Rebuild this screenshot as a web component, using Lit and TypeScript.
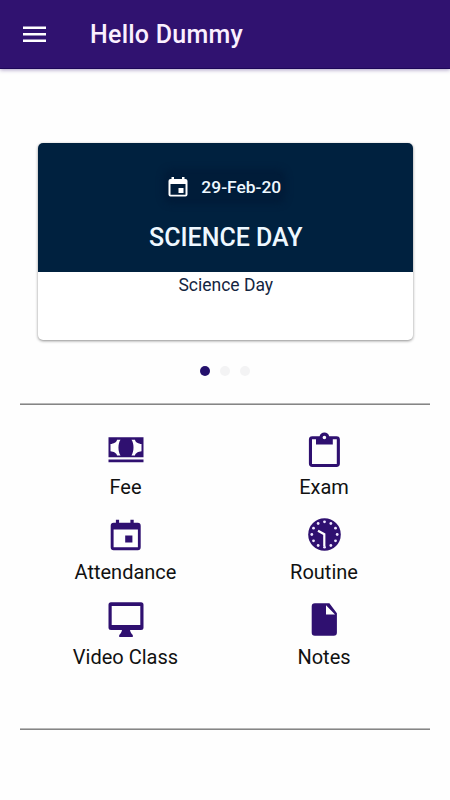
import { LitElement, html, css, svg } from "lit";
import { customElement, property } from "lit/decorators.js";

const ticks = Array.from({ length: 12 }, (_, i) => {
  const a = (i * Math.PI) / 6;
  return { x: 18.5 + 12.7 * Math.sin(a), y: 17.5 - 12.7 * Math.cos(a) };
});

const icons: Record<string, unknown> = {
  fee: svg`
    <path d="M.5 5.300h35v20H.5zM12.500 7.800H9C8.700 10.300 5.500 11.800 2.500 12.100V19.300c3 .3 6.200 1.800 6.500 4.200H12.500C9.800 19.500 9.800 11.500 12.500 7.800zM23.500 7.800c2.700 3.700 2.700 11.700 0 15.700h3.500c.3-2.400 3.500-3.900 6.500-4.200v-7.200c-3-.3-6.200-1.800-6.500-4.300z" fill-rule="evenodd"/>
    <path d="M.5 27.500h35v2.800H.5z"/>`,
  exam: svg`
    <path transform="translate(-.7)" fill-rule="evenodd" d="M31.200 4.200h-7.300a5 5 0 0 0-9.600 0H7a3.400 3.400 0 0 0-3.400 3.400v24A3.400 3.400 0 0 0 7 35h24.200a3.400 3.400 0 0 0 3.400-3.400v-24a3.400 3.400 0 0 0-3.400-3.400zM19.100 3.700a1.800 1.800 0 1 1 0 3.600a1.800 1.800 0 0 1 0-3.600zM31.500 32H6.700V7.300h4v5.200h16.800V7.300h4z"/>`,
  calendar: svg`
    <path transform="translate(-.8)" fill-rule="evenodd" d="M25.200 18.500h-7.200v7h7.200zM23.200 2.800v3H11.900v-3H8.700v3H6.600a3 3 0 0 0-3.100 3v21.400a3 3 0 0 0 3.100 3h23.800a3 3 0 0 0 3.100-3V8.800a3 3 0 0 0-3.100-3h-3.900v-3zM30.700 30.300H6.400V12.500h24.300z"/>`,
  clock: svg`
    <circle cx="18.500" cy="17.500" r="16.300"/>
    ${ticks.map((t) => svg`<circle class="mark" cx=${t.x} cy=${t.y} r="1.400"/>`)}
    <path class="hand" d="M12 13.700L18.300 17.200V29"/>`,
  monitor: svg`
    <path fill-rule="evenodd" d="M3 .3h30a2.500 2.500 0 0 1 2.500 2.500v22.700a2.500 2.500 0 0 1-2.500 2.500H22c.3 2 1.400 3.700 2.800 4.900v2.100H11.200v-2.100c1.400-1.200 2.500-2.900 2.800-4.900H3A2.500 2.500 0 0 1 .5 25.500V2.800A2.500 2.500 0 0 1 3 .3zM3.700 4v19h28.600V4z"/>`,
  note: svg`
    <path fill-rule="evenodd" d="M7.600 1.300h14.500L29.600 11.200v19.300a3.200 3.200 0 0 1-3.200 3.200H7.600a3.200 3.200 0 0 1-3.200-3.200v-26A3.200 3.200 0 0 1 7.600 1.300zM18.700 3.300v9.200h9z" transform="translate(1.300)"/>`,
};

@customElement("menu-tile")
class MenuTile extends LitElement {
  @property() icon = "";
  @property() label = "";

  static styles = css`
    :host {
      display: flex;
      flex-direction: column;
      align-items: center;
      height: 85px;
    }
    .icon {
      display: block;
      width: 36px;
      height: 36px;
      fill: #2f1070;
    }
    .mark {
      fill: #f0e8ff;
    }
    .hand {
      fill: none;
      stroke: #fff;
      stroke-width: 2.200;
    }
    .label {
      margin-top: 7px;
      font-size: 20px;
      line-height: 24px;
      color: #111;
      white-space: nowrap;
    }
  `;

  render() {
    return html`
      <svg class="icon" viewBox="0 0 36 36">${icons[this.icon]}</svg>
      <span class="label">${this.label}</span>
    `;
  }
}

@customElement("app-root")
class AppRoot extends LitElement {
  static styles = css`
    :host {
      display: flex;
      flex-direction: column;
      box-sizing: border-box;
      height: 800px;
      background: #fefefe;
      font-family: Roboto, "Liberation Sans", sans-serif;
    }
    .bar {
      display: flex;
      align-items: center;
      box-sizing: border-box;
      height: 69px;
      padding-left: 23px;
      background: #301270;
      border-bottom: 1px solid #1d0758;
      box-shadow: 0 1px 4px rgba(48, 18, 112, 0.400);
      color: #fff;
    }
    .burger {
      width: 23px;
      height: 18px;
      fill: #fff;
    }
    .title {
      margin: 2px 0 0 44px;
      font-size: 25px;
      line-height: 30px;
      font-weight: 500;
      letter-spacing: 0.250px;
      color: #fbf0ff;
    }
    .card {
      width: 375px;
      height: 197.500px;
      margin: 73.500px 0 0 38.300px;
      border-radius: 5px;
      overflow: hidden;
      background: #fff;
      box-shadow: 0 1px 3px rgba(0, 0, 0, 0.450);
      text-align: center;
    }
    .banner {
      display: flex;
      flex-direction: column;
      align-items: center;
      box-sizing: border-box;
      height: 129.500px;
      padding-top: 31.500px;
      background: #00213f;
      color: #eef8ff;
    }
    .date {
      display: flex;
      align-items: center;
      gap: 13px;
      height: 25px;
      margin-right: 2px;
      font-size: 17.400px;
      font-weight: 500;
      border-radius: 4px;
      background: #001c39;
      box-shadow: 0 0 6px 5px #001c39;
    }
    .cal {
      width: 20px;
      height: 20px;
      fill: #fff;
    }
    .event {
      margin: 24px 0 0;
      font-size: 25px;
      line-height: 30px;
      font-weight: 500;
    }
    .detail {
      margin: 2px 0 0;
      font-size: 17.500px;
      line-height: 22px;
      color: #14253f;
    }
    .dots {
      display: flex;
      justify-content: center;
      gap: 10px;
      height: 10px;
      margin: 26px 1px 0 0;
    }
    .dot {
      width: 10px;
      height: 10px;
      border-radius: 50%;
      background: #f3f3f4;
    }
    .dot.active {
      background: #24106c;
    }
    .rule {
      height: 1px;
      margin: 0 20px;
      background: #858585;
      border-top: 1px solid #b9b9b9;
    }
    .rule.first {
      margin-top: 27px;
    }
    .grid {
      display: grid;
      grid-template-columns: 199px 198px;
      height: 296px;
      align-content: start;
      padding: 27px 0 0 26px;
      box-sizing: border-box;
    }
    .rule.last {
      margin-top: 27px;
    }
  `;

  render() {
    const tiles = [
      ["fee", "Fee"],
      ["exam", "Exam"],
      ["calendar", "Attendance"],
      ["clock", "Routine"],
      ["monitor", "Video Class"],
      ["note", "Notes"],
    ];
    return html`
      <header class="bar">
        <svg class="burger" viewBox="0 0 23 18">
          <path d="M0 1.500h23v2.500H0zM0 8h23v2.500H0zM0 14.500h23v2.500H0z" />
        </svg>
        <h1 class="title">Hello Dummy</h1>
      </header>
      <section class="card">
        <div class="banner">
          <div class="date">
            <svg class="cal" viewBox="0 0 20 20">
              <path fill-rule="evenodd" d="M15.500 11h-5v5h5zM14 0v2H6V0H3.500v2H2.500a2 2 0 0 0-2 2v13.500a2 2 0 0 0 2 2h15a2 2 0 0 0 2-2V4a2 2 0 0 0-2-2h-1V0zM17.500 17.700h-15V7h15z" />
            </svg>
            <span>29-Feb-20</span>
          </div>
          <h2 class="event">SCIENCE DAY</h2>
        </div>
        <p class="detail">Science Day</p>
      </section>
      <div class="dots">
        <span class="dot active"></span><span class="dot"></span><span class="dot"></span>
      </div>
      <div class="rule first"></div>
      <nav class="grid">
        ${tiles.map(([icon, label]) => html`<menu-tile icon=${icon} label=${label}></menu-tile>`)}
      </nav>
      <div class="rule last"></div>
    `;
  }
}
